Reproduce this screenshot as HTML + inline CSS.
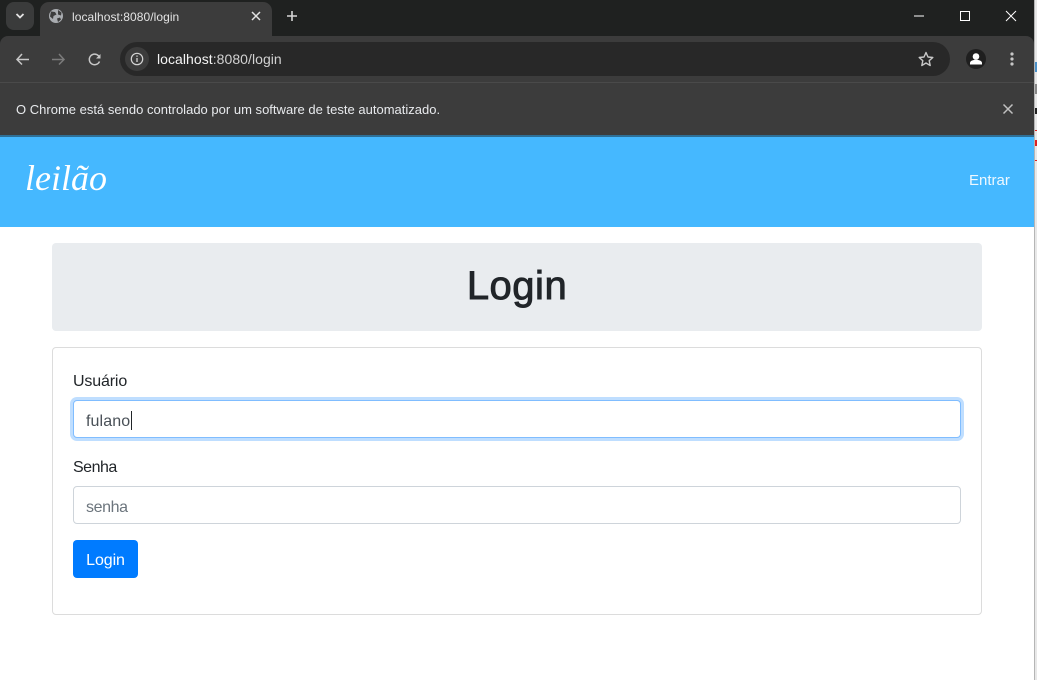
<!DOCTYPE html>
<html lang="pt-BR">
<head>
<meta charset="utf-8">
<title>localhost:8080/login</title>
<style>
html,body{margin:0;padding:0;width:1037px;height:680px;overflow:hidden;background:#fff;font-family:"Liberation Sans",sans-serif;}
.a{position:absolute;white-space:nowrap;}
svg{position:absolute;overflow:visible;}
#top{left:0;top:0;width:1034px;height:136px;background:#1f2120;}
#strip{left:1034px;top:0;width:3px;height:680px;background:#e8e8e8;}
#stripl{left:1034px;top:0;width:1px;height:680px;background:#b5b5b5;}
#toolbar{left:0;top:36px;width:1034px;height:46px;background:#3c3c3c;border-radius:8px 8px 0 0;}
#tab{left:40px;top:2px;width:232px;height:34px;background:#3c3c3c;border-radius:9px 9px 0 0;}
#drop{left:6px;top:2px;width:28px;height:28px;background:#3a3b3b;border-radius:8px;}
#omni{left:120px;top:42px;width:830px;height:34px;background:#282828;border-radius:17px;}
#infobar{left:0;top:82px;width:1034px;height:54px;background:#3c3c3c;border-top:1px solid #4a4a4a;box-sizing:border-box;}
#shadow{left:0;top:135px;width:1034px;height:2px;background:#2e6f96;}
#nav{left:0;top:137px;width:1034px;height:90px;background:#45b8ff;}
#jumbo{left:52px;top:243px;width:930px;height:88px;background:#e9ecef;border-radius:4px;}
#card{left:52px;top:347px;width:930px;height:268px;box-sizing:border-box;border:1px solid #dcdcdc;border-radius:4px;background:#fff;}
.input{box-sizing:border-box;left:73px;width:888px;height:38px;background:#fff;border:1px solid #ced4da;border-radius:4px;}
#u{top:400px;border-color:#80bdff;box-shadow:0 0 0 3px #bfdeff;}
#p{top:486px;}
#btn{left:73px;top:542px;width:65px;height:37px;color:#fff;font-size:16px;line-height:37px;text-align:center;letter-spacing:-.1px;}
#btnbg{left:73px;top:540px;width:65px;height:38px;background:#007bff;border-radius:4px;}
.t{font-size:16px;color:#212529;line-height:20px;}
</style>
</head>
<body>
<div class="a" id="top"></div>
<div class="a" id="drop"></div>
<svg style="left:0;top:0" width="40" height="36"><path d="M16.500 14l3.500 3.500 3.500-3.500" fill="none" stroke="#e3e3e3" stroke-width="1.800"/></svg>
<div class="a" id="tab"></div>
<svg style="left:49px;top:9px" width="14" height="14" viewBox="0 0 14 14"><circle cx="7" cy="7" r="7" fill="#a9acb0"/><path d="M2 2.500l4 .5 1.500 2.500-3 1.500-.5 3-3-2.500zM9 1l3.500 2.500-.5 3-3-1zM8 9.500l3-1 1 2-3 2.500z" fill="#3c3c3c"/></svg>
<div class="a" style="left:72px;top:9px;font-size:12px;line-height:16px;color:#e3e3e3;letter-spacing:.06px">localhost:8080/login</div>
<svg style="left:251px;top:11px" width="10" height="10"><path d="M1 1l8 8M9 1l-8 8" stroke="#e3e3e3" stroke-width="1.500"/></svg>
<svg style="left:286px;top:10px" width="12" height="12"><path d="M6 1v10M1 6h10" stroke="#d5d5d5" stroke-width="1.600"/></svg>
<svg style="left:914px;top:15px" width="11" height="2"><path d="M0 1h10" stroke="#fff" stroke-width="1"/></svg>
<svg style="left:960px;top:11px" width="10" height="10"><rect x=".5" y=".5" width="9" height="9" fill="none" stroke="#fff"/></svg>
<svg style="left:1006px;top:11px" width="10" height="10"><path d="M0 0l10 10M10 0L0 10" stroke="#fff" stroke-width="1"/></svg>

<div class="a" id="toolbar"></div>
<svg style="left:16px;top:53px" width="13" height="13"><path d="M6 1L1 6.500l5 5M1 6.500h12" fill="none" stroke="#c7c7c7" stroke-width="1.500"/></svg>
<svg style="left:52px;top:53px" width="13" height="13"><path d="M7 1l5 5.500-5 5M12 6.500H0" fill="none" stroke="#7b7b7b" stroke-width="1.500"/></svg>
<svg style="left:88px;top:53px" width="13" height="13"><path d="M11.500 8.500A5.300 5.300 0 1 1 10.500 2.800L12 4.500" fill="none" stroke="#c7c7c7" stroke-width="1.500"/><path d="M12.500 1v4.500H8z" fill="#c7c7c7"/></svg>
<div class="a" id="omni"></div>
<svg style="left:125px;top:47px" width="24" height="24"><circle cx="12" cy="12" r="12" fill="#3c3c3c"/><circle cx="12" cy="12" r="5.700" fill="none" stroke="#d5d5d5" stroke-width="1.200"/><path d="M12 11v4M12 8.500v1.300" stroke="#d5d5d5" stroke-width="1.300"/></svg>
<div class="a" style="left:157px;top:50px;font-size:14px;line-height:18px;color:#d2d2d2;letter-spacing:.05px"><span style="color:#f4f4f4">localhost</span>:8080/login</div>
<svg style="left:918px;top:51px" width="16" height="16" viewBox="0 0 16 16"><path d="M8 1.500l2 4.500 4.800.5-3.600 3.200 1 4.800L8 12l-4.200 2.500 1-4.800L1.200 6.500 6 6z" fill="none" stroke="#c7c7c7" stroke-width="1.400" stroke-linejoin="round"/></svg>
<svg style="left:966px;top:49px" width="20" height="20"><circle cx="10" cy="10" r="10" fill="#1f1f1f"/><circle cx="10" cy="7.500" r="3.300" fill="#fff"/><path d="M4 15.500v-1.500c0-2 3-3.200 6-3.200s6 1.200 6 3.200v1.500z" fill="#fff"/></svg>
<svg style="left:1009px;top:51px" width="6" height="16"><circle cx="3" cy="3" r="1.600" fill="#c7c7c7"/><circle cx="3" cy="8" r="1.600" fill="#c7c7c7"/><circle cx="3" cy="13" r="1.600" fill="#c7c7c7"/></svg>

<div class="a" id="infobar"></div>
<div class="a" style="left:16px;top:101px;font-size:13px;line-height:17px;color:#e8eaed;letter-spacing:.01px">O Chrome está sendo controlado por um software de teste automatizado.</div>
<svg style="left:1003px;top:104px" width="10" height="10"><path d="M.5.500l9 9M9.500.500l-9 9" stroke="#c0c0c0" stroke-width="1.500"/></svg>
<div class="a" id="shadow"></div>

<div class="a" id="nav"></div>
<div class="a" style="left:25px;top:155px;font-family:'Liberation Serif',serif;font-style:italic;font-size:36px;line-height:46px;color:#fff;">leilão</div>
<div class="a" style="left:969px;top:171px;font-size:15px;line-height:20px;color:#eef8ff;">Entrar</div>

<div class="a" id="jumbo"></div>
<div class="a" style="left:52px;width:930px;top:262px;text-align:center;font-size:40px;line-height:48px;font-weight:400;color:#212529;-webkit-text-stroke:.9px #212529;letter-spacing:.5px;">Login</div>

<div class="a" id="card"></div>
<div class="a t" style="left:73px;top:372px;letter-spacing:-.15px;">Usuário</div>
<div class="a input" id="u"></div>
<div class="a t" style="left:86px;top:412px;color:#495057;letter-spacing:.1px;">fulano</div>
<div class="a" style="left:131px;top:411px;width:1px;height:19px;background:#212529;"></div>
<div class="a t" style="left:73px;top:458px;letter-spacing:-.5px;">Senha</div>
<div class="a input" id="p"></div>
<div class="a t" style="left:86px;top:498px;color:#6c757d;letter-spacing:-.4px;">senha</div>
<div class="a" id="btnbg"></div>
<div class="a" id="btn">Login</div>

<div class="a" id="strip"></div>
<div class="a" id="stripl"></div>
<div class="a" style="left:1035px;top:62px;width:2px;height:10px;background:#4a90c8;"></div>
<div class="a" style="left:1035px;top:84px;width:2px;height:10px;background:#888;"></div>
<div class="a" style="left:1035px;top:108px;width:2px;height:6px;background:#222;"></div>
<div class="a" style="left:1035px;top:130px;width:2px;height:1px;background:#d22;"></div>
<div class="a" style="left:1035px;top:140px;width:2px;height:6px;background:#d22;"></div>
<div class="a" style="left:1035px;top:160px;width:2px;height:1px;background:#d22;"></div>
</body>
</html>
